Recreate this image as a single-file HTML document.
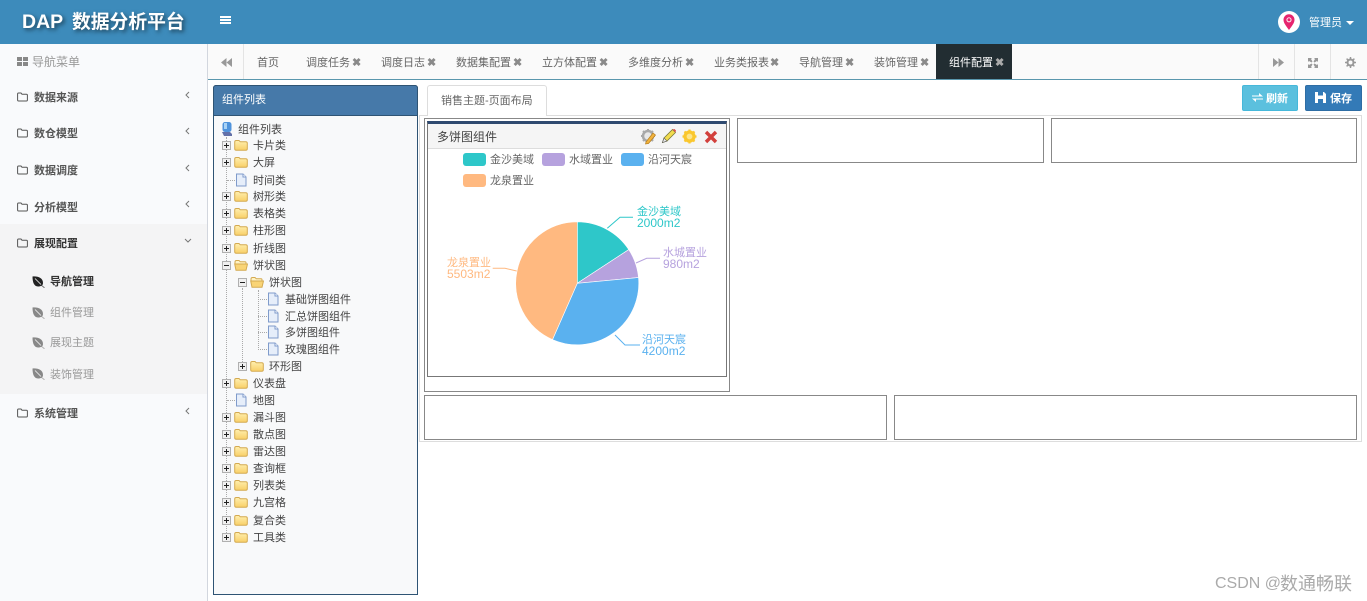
<!DOCTYPE html>
<html lang="zh"><head><meta charset="utf-8"><title>DAP 数据分析平台</title>
<style>
html,body{margin:0;padding:0;width:1367px;height:601px;overflow:hidden;background:#fff}
body{position:relative;font-family:"Liberation Sans","Noto Sans CJK SC",sans-serif;font-size:11px;color:#555;filter:blur(.3px)}
div,span.a,svg{position:absolute;box-sizing:border-box}
.t{line-height:16px;white-space:nowrap;transform:translateY(1px)}
.s{color:#555;font-weight:bold;left:34px}
.sub{color:#999;left:50px}
.tb{top:54px;color:#666}
.x{top:54px;color:#8a8a8a;font-size:11px;font-weight:bold}
.tr{color:#444}
.box{border:1px solid #888;background:#fff}
.vl{border-left:1px dotted #aaa;width:1px}
.hl{border-top:1px dotted #aaa;height:1px}
.sw{width:23px;height:13px;border-radius:3px}
.lg{color:#666}
.pl{font-size:11px;line-height:11px;white-space:nowrap}
.pl b{font-weight:normal;font-size:12px}
</style></head><body>
<svg width="0" height="0" style="left:0;top:0">
<defs>
<linearGradient id="fg" x1="0" y1="0" x2="0" y2="1"><stop offset="0" stop-color="#fff0b0"/><stop offset="1" stop-color="#f8cf67"/></linearGradient>
<symbol id="folder" viewBox="0 0 14 12"><path d="M.7 3Q.7 1.500 2.200 1.500H5L6.300 2.800H11.800Q13.300 2.800 13.300 4.300V9.800Q13.300 11.300 11.800 11.300H2.200Q.7 11.300 .7 9.800Z" fill="url(#fg)" stroke="#d4aa50"/></symbol>
<symbol id="ofolder" viewBox="0 0 14 12"><path d="M1 3Q1 1.500 2.500 1.500H5L6.300 2.800H11Q12 2.800 12 3.800V5H1Z" fill="#fff3c4" stroke="#d4aa50"/><path d="M.7 5H13.500L12 11.300H2Z" fill="#f9d476" stroke="#d4aa50"/></symbol>
<symbol id="file" viewBox="0 0 12 14"><path d="M1.500 1H8L11 4V13H1.500Z" fill="#e6eefa" stroke="#7f9bcb"/><path d="M8 1V4H11" fill="#fff" stroke="#7f9bcb"/></symbol>
<symbol id="plus" viewBox="0 0 9 9"><rect x=".5" y=".5" width="8" height="8" fill="#f0f0f0" stroke="#b0b0b0"/><path d="M2 4.500H7M4.500 2V7" stroke="#222"/></symbol>
<symbol id="minus" viewBox="0 0 9 9"><rect x=".5" y=".5" width="8" height="8" fill="#f0f0f0" stroke="#b0b0b0"/><path d="M2 4.500H7" stroke="#222"/></symbol>
<symbol id="fo" viewBox="0 0 11 10"><path d="M.6 2Q.6 1 1.600 1H4L5 2.200H9.400Q10.400 2.200 10.400 3.200V8Q10.400 9 9.400 9H1.600Q.6 9 .6 8Z" fill="none" stroke="#555" stroke-width="1"/></symbol>
<symbol id="leaf" viewBox="0 0 13 12"><path d="M.5 .5C6 0 11 2 11 7C11 10 8 10.500 6 10.500C2 10.500 .5 6 .5 .5Z" fill="currentColor"/><path d="M9 9L12.500 11.800" stroke="currentColor" fill="none" opacity=".6"/><path d="M3 2.500L9 8.500" stroke="#f4f4f5" stroke-width=".8" fill="none"/></symbol>
<symbol id="chl" viewBox="0 0 5 8"><path d="M4 1L1 4L4 7" fill="none" stroke="#777"/></symbol>
</defs></svg>

<!-- top bar -->
<div style="left:0;top:0;width:1367px;height:44px;background:#3d8bbb"></div>
<div style="left:22px;top:9px;color:#fff;font-size:19.500px;font-weight:bold;line-height:26px;white-space:nowrap;text-shadow:2px 2px 4px rgba(0,0,0,.55)">DAP</div>
<div style="left:72px;top:9px;color:#fff;font-size:18.800px;font-weight:bold;line-height:26px;white-space:nowrap;text-shadow:2px 2px 4px rgba(0,0,0,.55)">数据分析平台</div>
<div style="left:220px;top:16px;width:11px;height:2px;background:#fff"></div>
<div style="left:220px;top:19px;width:11px;height:2px;background:#fff"></div>
<div style="left:220px;top:22px;width:11px;height:2px;background:#fff"></div>
<div style="left:1278px;top:11px;width:22px;height:22px;border-radius:50%;background:#fff"></div>
<svg style="left:1282px;top:13px" width="14" height="18" viewBox="0 0 14 18"><path d="M7 17C4 13 1.500 10 1.500 6.800A5.500 5.500 0 0 1 12.500 6.800C12.500 10 10 13 7 17Z" fill="#e6246f"/><circle cx="7" cy="6.800" r="2.600" fill="#fff" opacity=".85"/><circle cx="7" cy="6.800" r="1.500" fill="#e6246f"/></svg>
<div class="t" style="left:1309px;top:14px;color:#fff">管理员</div>
<div style="left:1346px;top:21px;border:4px solid transparent;border-top-color:#fff;border-bottom:0"></div>

<!-- sidebar -->
<div style="left:0;top:44px;width:208px;height:557px;background:#f9fafc;border-right:1px solid #d2d6de"></div>
<div style="left:0;top:224px;width:207px;height:170px;background:#f4f4f5"></div>
<svg style="left:17px;top:57px" width="11" height="9"><rect width="5" height="4" fill="#888"/><rect x="6" width="5" height="4" fill="#888"/><rect y="5" width="5" height="4" fill="#888"/><rect x="6" y="5" width="5" height="4" fill="#888"/></svg>
<div class="t" style="left:32px;top:53px;color:#999;font-size:12px">导航菜单</div>

<svg style="left:17px;top:92px" width="11" height="10"><use href="#fo"/></svg><div class="t s" style="top:89px">数据来源</div><svg style="left:185px;top:91px" width="5" height="8"><use href="#chl"/></svg>
<svg style="left:17px;top:128px" width="11" height="10"><use href="#fo"/></svg><div class="t s" style="top:125px">数仓模型</div><svg style="left:185px;top:127px" width="5" height="8"><use href="#chl"/></svg>
<svg style="left:17px;top:165px" width="11" height="10"><use href="#fo"/></svg><div class="t s" style="top:162px">数据调度</div><svg style="left:185px;top:164px" width="5" height="8"><use href="#chl"/></svg>
<svg style="left:17px;top:202px" width="11" height="10"><use href="#fo"/></svg><div class="t s" style="top:199px">分析模型</div><svg style="left:185px;top:200px" width="5" height="8"><use href="#chl"/></svg>
<svg style="left:17px;top:238px" width="11" height="10"><use href="#fo"/></svg><div class="t s" style="top:235px;color:#333">展现配置</div><svg style="left:184px;top:238px" width="8" height="5" viewBox="0 0 8 5"><path d="M1 1L4 4L7 1" fill="none" stroke="#777"/></svg>
<svg style="left:32px;top:276px;color:#222" width="13" height="12"><use href="#leaf"/></svg><div class="t sub" style="top:273px;color:#333;font-weight:bold">导航管理</div>
<svg style="left:32px;top:307px;color:#888" width="13" height="12"><use href="#leaf"/></svg><div class="t sub" style="top:304px">组件管理</div>
<svg style="left:32px;top:337px;color:#888" width="13" height="12"><use href="#leaf"/></svg><div class="t sub" style="top:334px">展现主题</div>
<svg style="left:32px;top:368px;color:#888" width="13" height="12"><use href="#leaf"/></svg><div class="t sub" style="top:366px">装饰管理</div>
<svg style="left:17px;top:408px" width="11" height="10"><use href="#fo"/></svg><div class="t s" style="top:405px">系统管理</div><svg style="left:185px;top:407px" width="5" height="8"><use href="#chl"/></svg>

<!-- tab bar -->
<div style="left:208px;top:44px;width:1159px;height:36px;background:#fafafa;border-bottom:1px solid #5a97ad"></div>
<div style="left:243px;top:44px;width:1px;height:35px;background:#e4e4e4"></div>
<div style="left:1258px;top:44px;width:1px;height:35px;background:#e4e4e4"></div>
<div style="left:1294px;top:44px;width:1px;height:35px;background:#e4e4e4"></div>
<div style="left:1330px;top:44px;width:1px;height:35px;background:#e4e4e4"></div>
<svg style="left:221px;top:58px" width="11" height="9"><path d="M5.500 0V9L0 4.500ZM11 0V9L5.500 4.500Z" fill="#999"/></svg>
<svg style="left:1273px;top:58px" width="11" height="9"><path d="M0 0V9L5.500 4.500ZM5.500 0V9L11 4.500Z" fill="#999"/></svg>
<svg style="left:1308px;top:58px" width="10" height="10" viewBox="0 0 10 10"><path d="M0 0H4L3 1L4.500 3.500L3.500 4.500L1 3L0 4ZM10 0V4L9 3L6.500 4.500L5.500 3.500L7 1L6 0ZM0 10V6L1 7L3.500 5.500L4.500 6.500L3 9L4 10ZM10 10H6L7 9L5.500 6.500L6.500 5.500L9 7L10 6Z" fill="#999"/></svg>
<svg style="left:1345px;top:57px" width="11" height="11" viewBox="0 0 11 11"><circle cx="5.500" cy="5.500" r="3" fill="none" stroke="#999" stroke-width="2"/><path d="M5.500 0V2M5.500 9V11M0 5.500H2M9 5.500H11M1.600 1.600L3 3M8 8L9.400 9.400M1.600 9.400L3 8M8 3L9.400 1.600" stroke="#999" stroke-width="1.500"/></svg>
<div class="t tb" style="left:257px">首页</div>
<div class="t tb" style="left:306px">调度任务</div><div class="t x" style="left:352px">✖</div>
<div class="t tb" style="left:381px">调度日志</div><div class="t x" style="left:427px">✖</div>
<div class="t tb" style="left:456px">数据集配置</div><div class="t x" style="left:513px">✖</div>
<div class="t tb" style="left:542px">立方体配置</div><div class="t x" style="left:599px">✖</div>
<div class="t tb" style="left:628px">多维度分析</div><div class="t x" style="left:685px">✖</div>
<div class="t tb" style="left:714px">业务类报表</div><div class="t x" style="left:770px">✖</div>
<div class="t tb" style="left:799px">导航管理</div><div class="t x" style="left:845px">✖</div>
<div class="t tb" style="left:874px">装饰管理</div><div class="t x" style="left:920px">✖</div>
<div style="left:936px;top:44px;width:76px;height:35px;background:#222d32"></div>
<div class="t tb" style="left:949px;color:#fff">组件配置</div><div class="t x" style="left:995px;color:#aaa">✖</div>

<!-- tree panel -->
<div style="left:213px;top:85px;width:205px;height:510px;background:#f8f9fa;border:1px solid #2f5474;border-radius:3px 3px 0 0"></div>
<div style="left:213px;top:85px;width:205px;height:31px;background:#4679a9;border:1px solid #2f5474;border-radius:3px 3px 0 0"></div>
<div class="t" style="left:222px;top:91px;color:#fff">组件列表</div>

<div class="vl" style="left:226px;top:137px;height:400px"></div>
<div class="vl" style="left:242px;top:288px;height:78px"></div>
<div class="vl" style="left:258px;top:290px;height:60px"></div>
<div class="hl" style="left:227px;top:180px;width:8px"></div>
<div class="hl" style="left:227px;top:400px;width:8px"></div>
<div class="hl" style="left:258px;top:299px;width:9px"></div>
<div class="hl" style="left:258px;top:316px;width:9px"></div>
<div class="hl" style="left:258px;top:332px;width:9px"></div>
<div class="hl" style="left:258px;top:349px;width:9px"></div>

<svg style="left:221px;top:121px" width="12" height="16" viewBox="0 0 12 16"><rect x="1.500" y="1" width="9" height="10" rx="2.500" fill="#4f93dc"/><rect x="3" y="2" width="3" height="6" fill="#a8d2f5"/><path d="M1 11H9L11 13V15H3Z" fill="#6270a8"/></svg>
<div class="t tr" style="left:238px;top:121px">组件列表</div>

<!-- rows -->
<svg style="left:222px;top:141px" width="9" height="9"><use href="#plus"/></svg><svg style="left:234px;top:139px" width="14" height="12"><use href="#folder"/></svg><div class="t tr" style="left:253px;top:137px">卡片类</div>
<svg style="left:222px;top:158px" width="9" height="9"><use href="#plus"/></svg><svg style="left:234px;top:156px" width="14" height="12"><use href="#folder"/></svg><div class="t tr" style="left:253px;top:154px">大屏</div>
<svg style="left:235px;top:173px" width="12" height="14"><use href="#file"/></svg><div class="t tr" style="left:253px;top:172px">时间类</div>
<svg style="left:222px;top:192px" width="9" height="9"><use href="#plus"/></svg><svg style="left:234px;top:190px" width="14" height="12"><use href="#folder"/></svg><div class="t tr" style="left:253px;top:188px">树形类</div>
<svg style="left:222px;top:209px" width="9" height="9"><use href="#plus"/></svg><svg style="left:234px;top:207px" width="14" height="12"><use href="#folder"/></svg><div class="t tr" style="left:253px;top:205px">表格类</div>
<svg style="left:222px;top:226px" width="9" height="9"><use href="#plus"/></svg><svg style="left:234px;top:224px" width="14" height="12"><use href="#folder"/></svg><div class="t tr" style="left:253px;top:222px">柱形图</div>
<svg style="left:222px;top:244px" width="9" height="9"><use href="#plus"/></svg><svg style="left:234px;top:242px" width="14" height="12"><use href="#folder"/></svg><div class="t tr" style="left:253px;top:240px">折线图</div>
<svg style="left:222px;top:261px" width="9" height="9"><use href="#minus"/></svg><svg style="left:234px;top:259px" width="14" height="12"><use href="#ofolder"/></svg><div class="t tr" style="left:253px;top:257px">饼状图</div>
<svg style="left:238px;top:278px" width="9" height="9"><use href="#minus"/></svg><svg style="left:250px;top:276px" width="14" height="12"><use href="#ofolder"/></svg><div class="t tr" style="left:269px;top:274px">饼状图</div>
<svg style="left:267px;top:292px" width="12" height="14"><use href="#file"/></svg><div class="t tr" style="left:285px;top:291px">基础饼图组件</div>
<svg style="left:267px;top:309px" width="12" height="14"><use href="#file"/></svg><div class="t tr" style="left:285px;top:308px">汇总饼图组件</div>
<svg style="left:267px;top:325px" width="12" height="14"><use href="#file"/></svg><div class="t tr" style="left:285px;top:324px">多饼图组件</div>
<svg style="left:267px;top:342px" width="12" height="14"><use href="#file"/></svg><div class="t tr" style="left:285px;top:341px">玫瑰图组件</div>
<svg style="left:238px;top:362px" width="9" height="9"><use href="#plus"/></svg><svg style="left:250px;top:360px" width="14" height="12"><use href="#folder"/></svg><div class="t tr" style="left:269px;top:358px">环形图</div>
<svg style="left:222px;top:379px" width="9" height="9"><use href="#plus"/></svg><svg style="left:234px;top:377px" width="14" height="12"><use href="#folder"/></svg><div class="t tr" style="left:253px;top:375px">仪表盘</div>
<svg style="left:235px;top:393px" width="12" height="14"><use href="#file"/></svg><div class="t tr" style="left:253px;top:392px">地图</div>
<svg style="left:222px;top:413px" width="9" height="9"><use href="#plus"/></svg><svg style="left:234px;top:411px" width="14" height="12"><use href="#folder"/></svg><div class="t tr" style="left:253px;top:409px">漏斗图</div>
<svg style="left:222px;top:430px" width="9" height="9"><use href="#plus"/></svg><svg style="left:234px;top:428px" width="14" height="12"><use href="#folder"/></svg><div class="t tr" style="left:253px;top:426px">散点图</div>
<svg style="left:222px;top:447px" width="9" height="9"><use href="#plus"/></svg><svg style="left:234px;top:445px" width="14" height="12"><use href="#folder"/></svg><div class="t tr" style="left:253px;top:443px">雷达图</div>
<svg style="left:222px;top:464px" width="9" height="9"><use href="#plus"/></svg><svg style="left:234px;top:462px" width="14" height="12"><use href="#folder"/></svg><div class="t tr" style="left:253px;top:460px">查询框</div>
<svg style="left:222px;top:481px" width="9" height="9"><use href="#plus"/></svg><svg style="left:234px;top:479px" width="14" height="12"><use href="#folder"/></svg><div class="t tr" style="left:253px;top:477px">列表类</div>
<svg style="left:222px;top:498px" width="9" height="9"><use href="#plus"/></svg><svg style="left:234px;top:496px" width="14" height="12"><use href="#folder"/></svg><div class="t tr" style="left:253px;top:494px">九宫格</div>
<svg style="left:222px;top:516px" width="9" height="9"><use href="#plus"/></svg><svg style="left:234px;top:514px" width="14" height="12"><use href="#folder"/></svg><div class="t tr" style="left:253px;top:512px">复合类</div>
<svg style="left:222px;top:533px" width="9" height="9"><use href="#plus"/></svg><svg style="left:234px;top:531px" width="14" height="12"><use href="#folder"/></svg><div class="t tr" style="left:253px;top:529px">工具类</div>

<!-- content -->
<div style="left:419px;top:115px;width:943px;height:327px;border:1px solid #ddd;background:#fff"></div>
<div style="left:427px;top:85px;width:120px;height:31px;background:#fff;border:1px solid #ddd;border-bottom:0;border-radius:3px 3px 0 0"></div>
<div class="t" style="left:441px;top:92px;color:#666">销售主题-页面布局</div>

<div style="left:1242px;top:85px;width:56px;height:26px;background:#5bc0de;border:1px solid #46b8da;border-radius:2px"></div>
<svg style="left:1252px;top:93px" width="11" height="9" viewBox="0 0 11 9"><path d="M0 2.500H7V0L11 3.500H0ZM11 6.500H4V9L0 5.500H11Z" fill="#fff"/></svg>
<div class="t" style="left:1266px;top:90px;color:#fff;font-weight:bold">刷新</div>
<div style="left:1305px;top:85px;width:57px;height:26px;background:#337ab7;border:1px solid #2e6da4;border-radius:2px"></div>
<svg style="left:1315px;top:92px" width="11" height="11" viewBox="0 0 11 11"><path d="M0 0H9L11 2V11H0Z" fill="#fff"/><rect x="3" y="0" width="5" height="3.500" fill="#337ab7"/><rect x="3" y="7" width="5" height="4" fill="#337ab7"/></svg>
<div class="t" style="left:1330px;top:90px;color:#fff;font-weight:bold">保存</div>

<div class="box" style="left:424px;top:118px;width:306px;height:274px"></div>
<div class="box" style="left:737px;top:118px;width:307px;height:45px"></div>
<div class="box" style="left:1051px;top:118px;width:306px;height:45px"></div>
<div class="box" style="left:424px;top:395px;width:463px;height:45px"></div>
<div class="box" style="left:894px;top:395px;width:463px;height:45px"></div>

<div style="left:427px;top:121px;width:300px;height:256px;background:#fff;border:1px solid #777;border-top:3px solid #2f4a70"></div>
<div style="left:428px;top:124px;width:298px;height:25px;background:#f5f5f5;border-bottom:1px solid #ddd"></div>
<div class="t" style="left:437px;top:128px;color:#444;font-size:12px">多饼图组件</div>
<svg style="left:640px;top:128px" width="17" height="17" viewBox="0 0 17 17"><circle cx="8" cy="8" r="5" fill="#e8e8e8" stroke="#a9a9a9" stroke-width="2.500"/><path d="M8 1V3.500M8 12.500V15M1 8H3.500M12.500 8H15M3 3L4.800 4.800M11.200 11.200L13 13M3 13L4.800 11.200M11.200 4.800L13 3" stroke="#a9a9a9" stroke-width="2"/><path d="M6 14L13 5L15.500 7L8.500 15.500L5.500 16Z" fill="#f2b33d" stroke="#b67f1f" stroke-width=".7"/></svg>
<svg style="left:661px;top:128px" width="16" height="16" viewBox="0 0 16 16"><path d="M1.500 14.500L3 10L11.500 1.500L14.500 4.500L6 13Z" fill="#f2dc4e" stroke="#7b7b3b" stroke-width=".8"/><path d="M11.500 1.500L14.500 4.500L15 2.500L13.500 1Z" fill="#d9534f"/><path d="M1.500 14.500L3 10L6 13Z" fill="#eee" stroke="#555" stroke-width=".6"/></svg>
<svg style="left:682px;top:129px" width="15" height="15" viewBox="0 0 15 15"><circle cx="7.500" cy="7.500" r="4.500" fill="#fde58a" stroke="#fac72e" stroke-width="3.200"/><path d="M7.500 .5V3M7.500 12V14.500M.5 7.500H3M12 7.500H14.500M2.500 2.500L4.300 4.300M10.700 10.700L12.500 12.500M2.500 12.500L4.300 10.700M10.700 4.300L12.500 2.500" stroke="#fac72e" stroke-width="2.200"/></svg>
<svg style="left:704px;top:130px" width="14" height="14" viewBox="0 0 14 14"><path d="M2 2L12 12M12 2L2 12" stroke="#d2403c" stroke-width="3.400"/></svg>

<!-- legend -->
<div class="sw" style="left:463px;top:153px;background:#2ec7c9"></div><div class="t lg" style="left:490px;top:151px">金沙美域</div>
<div class="sw" style="left:542px;top:153px;background:#b6a2de"></div><div class="t lg" style="left:569px;top:151px">水域置业</div>
<div class="sw" style="left:621px;top:153px;background:#5ab1ef"></div><div class="t lg" style="left:648px;top:151px">沿河天宸</div>
<div class="sw" style="left:463px;top:174px;background:#ffb980"></div><div class="t lg" style="left:490px;top:172px">龙泉置业</div>

<!-- pie -->
<svg style="left:428px;top:190px" width="298" height="186" viewBox="428 190 298 186">
<path d="M577.300 283.300L577.300 221.800A61.500 61.500 0 0 1 628.750 249.600Z" fill="#2ec7c9" stroke="#fff" stroke-width=".6"/>
<path d="M577.300 283.300L628.750 249.600A61.500 61.500 0 0 1 638.500 277.500Z" fill="#b6a2de" stroke="#fff" stroke-width=".6"/>
<path d="M577.300 283.300L638.500 277.500A61.500 61.500 0 0 1 552.500 339.600Z" fill="#5ab1ef" stroke="#fff" stroke-width=".6"/>
<path d="M577.300 283.300L552.500 339.600A61.500 61.500 0 0 1 577.300 221.800Z" fill="#ffb980" stroke="#fff" stroke-width=".6"/>
<path d="M607.300 228.300L620 217.300H633" fill="none" stroke="#2ec7c9"/>
<path d="M636 263L646.700 258.300H660" fill="none" stroke="#b6a2de"/>
<path d="M615 335L625 345H640" fill="none" stroke="#5ab1ef"/>
<path d="M516.700 271L505 268.300H492.700" fill="none" stroke="#ffb980"/>
</svg>
<div class="pl" style="left:637px;top:207px;color:#2ec7c9">金沙美域<br><b>2000m2</b></div>
<div class="pl" style="left:663px;top:248px;color:#b6a2de">水城置业<br><b>980m2</b></div>
<div class="pl" style="left:642px;top:335px;color:#5ab1ef">沿河天宸<br><b>4200m2</b></div>
<div class="pl" style="left:447px;top:258px;color:#ffb980;text-align:right;width:43px">龙泉置业<br><b>5503m2</b></div>

<div class="t" style="left:1215px;top:574px;color:#aaa;font-size:16px;line-height:18px">CSDN @</div>
<div class="t" style="left:1280px;top:574px;color:#aaa;font-size:18px;line-height:18px">数通畅联</div>
</body></html>
